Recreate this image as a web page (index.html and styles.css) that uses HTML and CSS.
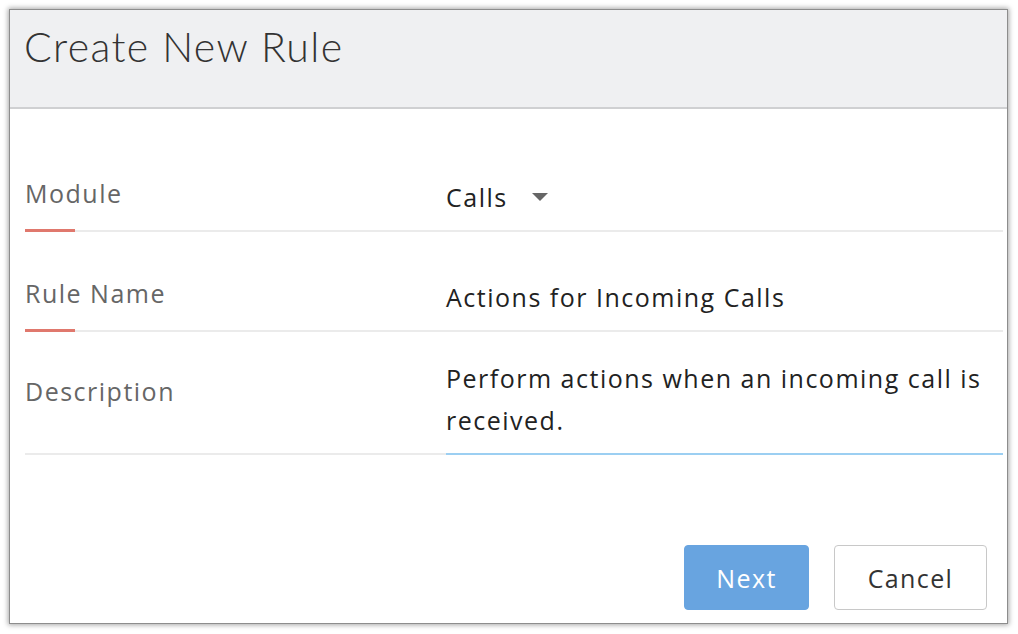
FILE: index.html
```html
<!DOCTYPE html>
<html>
<head>
<meta charset="utf-8">
<link rel="stylesheet" href="styles.css">
</head>
<body>
<div class="dialog">
  <div class="dialog-header">
    <h1 class="dialog-title">Create New Rule</h1>
  </div>
  <div class="dialog-body">
    <div class="form-row row-tall">
      <div class="field-label">Module</div>
      <div class="field-value">
        <span>Calls</span>
        <span class="caret"></span>
      </div>
    </div>
    <div class="form-row">
      <div class="field-label">Rule Name</div>
      <div class="field-value">Actions for Incoming Calls</div>
    </div>
    <div class="form-row row-tall row-desc">
      <div class="field-label label-plain">Description</div>
      <div class="field-value value-active">Perform actions when an incoming call is received.</div>
    </div>
  </div>
  <div class="dialog-footer">
    <button class="btn btn-primary">Next</button>
    <button class="btn btn-secondary">Cancel</button>
  </div>
</div>
</body>
</html>
```
FILE: styles.css
```css
* { box-sizing: border-box; }
html, body { margin: 0; padding: 0; background: #fff; }
body {
  font-family: "Open Sans", Lato, sans-serif;
  width: 1018px;
  height: 634px;
  padding: 9px 10px 10px 9px;
}
.dialog {
  width: 999px;
  height: 615px;
  border: 1px solid #8d8d8d;
  box-shadow: 0 0 5px 1px rgba(0,0,0,0.35);
  background: #fff;
  display: flex;
  flex-direction: column;
}
.dialog-header {
  height: 99px;
  background: #eff0f2;
  border-bottom: 2px solid #cfd0d2;
  padding: 12px 14px 0;
}
.dialog-title {
  margin: 0;
  font-family: Lato, sans-serif;
  font-weight: 300;
  font-size: 41px;
  line-height: 50px;
  color: #333;
  letter-spacing: 1.4px;
}
.dialog-body {
  padding: 0 4px 0 15px;
}
.form-row {
  display: grid;
  grid-template-columns: 421px 1fr;
  align-items: end;
  height: 100px;
}
.form-row.row-tall { height: 123px; }
.field-label, .field-value {
  height: 100%;
  display: flex;
  align-items: flex-end;
  border-bottom: 2px solid #ebebeb;
  letter-spacing: 1.5px;
}
.field-label {
  position: relative;
  font-size: 25px;
  color: #666;
  padding-bottom: 22px;
  line-height: 30px;
}
.field-label::after {
  content: "";
  position: absolute;
  left: 0;
  bottom: -2px;
  width: 50px;
  height: 3px;
  background: #e0786d;
}
.field-label.label-plain::after { display: none; }
.row-desc .field-label { padding-bottom: 47px; }
.field-value {
  font-size: 25px;
  color: #222;
  line-height: 42px;
  padding-bottom: 12px;
}
.value-active {
  border-bottom-color: #9ccff2;
  padding-right: 14px;
}
.caret {
  display: inline-block;
  width: 0;
  height: 0;
  border-left: 8px solid transparent;
  border-right: 8px solid transparent;
  border-top: 8px solid #666;
  margin-left: 24px;
  margin-bottom: 17px;
}
.dialog-footer {
  margin-top: auto;
  display: flex;
  justify-content: flex-end;
  gap: 25px;
  padding: 0 20px 13px 0;
}
.btn {
  height: 65px;
  font-family: "Open Sans", Lato, sans-serif;
  font-size: 25px;
  letter-spacing: 1.4px;
  border-radius: 4px;
  cursor: pointer;
}
.btn-primary {
  width: 125px;
  background: #68a4e0;
  color: #fff;
  border: 1px solid #68a4e0;
}
.btn-secondary {
  width: 153px;
  background: #fff;
  color: #333;
  border: 1px solid #c8c8c8;
}
```
